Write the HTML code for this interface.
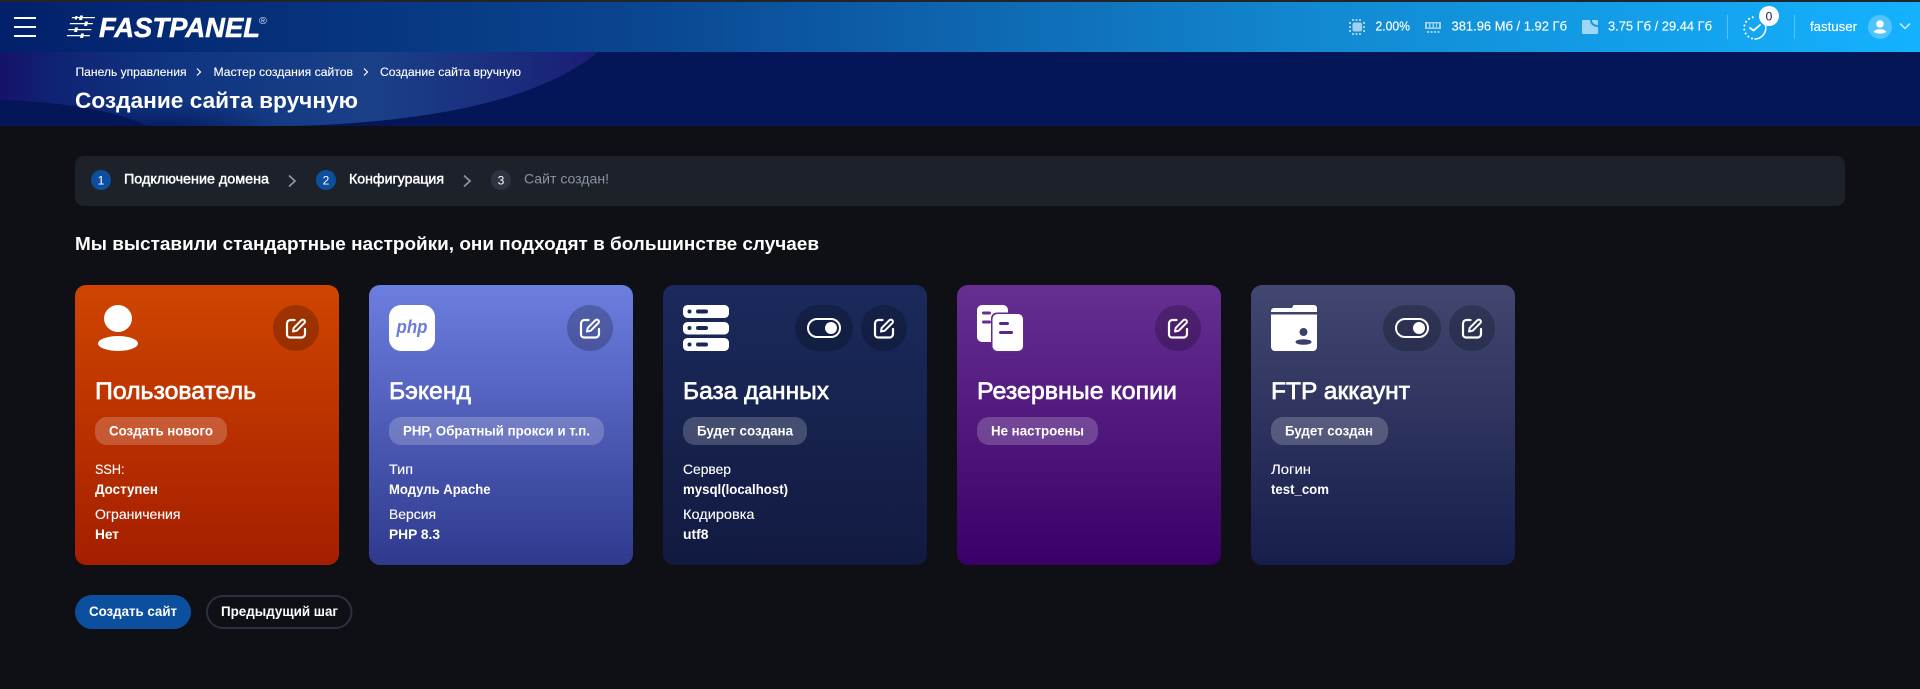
<!DOCTYPE html>
<html lang="ru">
<head>
<meta charset="utf-8">
<title>Создание сайта вручную</title>
<style>
html,body{margin:0;padding:0;background:#0e1016;width:1920px;height:689px;overflow:hidden}
svg{display:block}
text{font-family:"Liberation Sans",sans-serif;fill:#fff}
.m{stroke:#fff;stroke-width:.45px}
.t{font-size:24px;stroke:#fff;stroke-width:.65px}
.bd{font-size:14px;font-weight:700}
.l{font-size:14px;stroke:#fff;stroke-width:.12px}
.v{font-size:14px;font-weight:700}
.h{font-size:12.5px;stroke:#fff;stroke-width:.15px}
</style>
</head>
<body>
<svg width="1920" height="689" viewBox="0 0 1920 689" xmlns="http://www.w3.org/2000/svg">
<defs>
<clipPath id="sub"><rect x="0" y="52" width="1920" height="74"/></clipPath>
<linearGradient id="hd" x1="0" x2="1" y1="0" y2="0"><stop offset="0" stop-color="#03206a"/><stop offset=".33" stop-color="#0a4590"/><stop offset=".68" stop-color="#1288d0"/><stop offset="1" stop-color="#14b2ff"/></linearGradient>
<linearGradient id="arc" gradientUnits="userSpaceOnUse" x1="0" x2="598" y1="0" y2="0"><stop offset="0" stop-color="#15126a"/><stop offset=".1" stop-color="#0f2474"/><stop offset=".28" stop-color="#0f3480"/><stop offset=".62" stop-color="#1a4088"/><stop offset=".88" stop-color="#1a2a7c"/><stop offset="1" stop-color="#1c1c74"/></linearGradient>
<radialGradient id="shade" cx=".5" cy=".5" r=".5"><stop offset="0" stop-color="#041658" stop-opacity=".75"/><stop offset="1" stop-color="#041658" stop-opacity="0"/></radialGradient>
<linearGradient id="c1" x1="0" x2="0" y1="0" y2="1"><stop offset="0" stop-color="#cf4500"/><stop offset="1" stop-color="#a51e00"/></linearGradient>
<linearGradient id="c2" x1="0" x2="0" y1="0" y2="1"><stop offset="0" stop-color="#6c7edf"/><stop offset="1" stop-color="#2f3a8e"/></linearGradient>
<linearGradient id="c3" x1="0" x2="0" y1="0" y2="1"><stop offset="0" stop-color="#1b2a5c"/><stop offset="1" stop-color="#121a40"/></linearGradient>
<linearGradient id="c4" x1="0" x2="0" y1="0" y2="1"><stop offset="0" stop-color="#662f92"/><stop offset="1" stop-color="#3a0068"/></linearGradient>
<linearGradient id="c5" x1="0" x2="0" y1="0" y2="1"><stop offset="0" stop-color="#41476f"/><stop offset="1" stop-color="#181e4c"/></linearGradient>
<g id="edit" fill="none" stroke="#fff" stroke-linecap="round" stroke-linejoin="round">
<path stroke-width="2.200" d="M8.500 2H4.500A3.500 3.500 0 0 0 1 5.500v11A3 3 0 0 0 4 19.500h11.500a3.500 3.500 0 0 0 3.500-3.500V11"/>
<path stroke-width="2" d="M7 13.500l.7-3.600L15.400 2.200a2 2 0 0 1 2.900 0 2 2 0 0 1 0 2.900L10.600 12.800z"/>
</g>
<g id="tog"><rect x="1" y="1" width="32" height="18" rx="9" fill="none" stroke="#fff" stroke-width="2"/><circle cx="24" cy="10" r="6" fill="#fff"/></g>
</defs>

<rect width="1920" height="689" fill="#0e1016"/>

<!-- top bar -->
<rect y="0" width="1920" height="2" fill="#222428"/>
<rect y="2" width="1920" height="50" fill="url(#hd)"/>
<g fill="#fff">
<rect x="14" y="17" width="22" height="2"/><rect x="14" y="26" width="22" height="2"/><rect x="14" y="35" width="22" height="2"/>
</g>
<!-- logo -->
<g fill="#fff">
<path d="M72 17h23l-.3 1.300h-23zM80 15.500h3l-.9 4.500h-3zM75.500 16h2l-.7 3.500h-2z"/>
<path d="M70 23h23l-.3 1.300h-23zM85 21.500h3l-.9 4.500h-3z"/>
<path d="M68.500 29h23l-.3 1.300h-23zM75 27.500h3l-.9 4.500h-3z"/>
<path d="M67 35h23l-.3 1.300h-23zM81 33.500h3l-.9 4.500h-3z"/>
</g>
<text x="99" y="37" font-size="27.500" font-weight="700" font-style="italic" textLength="161" lengthAdjust="spacingAndGlyphs" stroke="#fff" stroke-width=".5">FASTPANEL</text>
<text x="259" y="24" font-size="10" textLength="8" lengthAdjust="spacingAndGlyphs" style="fill:#cfe0f5">®</text>

<!-- top right -->
<g fill="#fff" fill-opacity=".6">
<rect x="1352.500" y="22.500" width="9.500" height="9" rx="2"/>
<path d="M1352 19h2v2h-2zM1355.500 19h2v2h-2zM1359 19h2v2h-2zM1352 33h2v2h-2zM1355.500 33h2v2h-2zM1359 33h2v2h-2zM1349 22h2v2h-2zM1349 26h2v2h-2zM1349 30h2v2h-2zM1363 22h2v2h-2zM1363 26h2v2h-2zM1363 30h2v2h-2z"/>
<path fill-rule="evenodd" d="M1425 22h16v7h-16zM1427 23.500v4h2v-4zM1430.500 23.500v4h2v-4zM1434 23.500v4h2v-4zM1437 23.500v4h2v-4z"/>
<path d="M1427 31h2v2h-2zM1430.500 31h2v2h-2zM1434 31h2v2h-2zM1437.500 31h2v2h-2z"/>
<path d="M1582 21a1 1 0 0 1 1-1h7c0 4 3 7 8 7v6a1 1 0 0 1-1 1h-14a1 1 0 0 1-1-1z"/>
<path d="M1592 20h5a1 1 0 0 1 1 1v4c-3.500 0-6-2-6-5z"/>
</g>
<text x="1375.500" y="30.500" class="h" textLength="34.500" lengthAdjust="spacingAndGlyphs">2.00%</text>
<text x="1451.500" y="30.500" class="h" textLength="115.500" lengthAdjust="spacingAndGlyphs">381.96 Мб / 1.92 Гб</text>
<text x="1608" y="30.500" class="h" textLength="104" lengthAdjust="spacingAndGlyphs">3.75 Гб / 29.44 Гб</text>
<rect x="1727" y="15" width="1" height="24" fill="#fff" fill-opacity=".3"/>
<g fill="none" stroke="#fff" stroke-width="1.600" stroke-linecap="round">
<path d="M1764 22a11 11 0 0 1-9 17"/>
<path stroke-dasharray=".1 4" stroke-width="2" d="M1752 38.500a11 11 0 0 1 4-21.500"/>
<path stroke-width="1.800" d="M1750 28l3.500 2.500 6.500-5.500"/>
</g>
<circle cx="1769" cy="16" r="10" fill="#fff"/>
<text x="1769" y="20.500" font-size="12" text-anchor="middle" style="fill:#0c1a52">0</text>
<rect x="1794" y="15" width="1" height="24" fill="#fff" fill-opacity=".3"/>
<text x="1810" y="31" textLength="47" lengthAdjust="spacingAndGlyphs" class="h" style="font-size:13px">fastuser</text>
<circle cx="1880" cy="27" r="12" fill="#fff" fill-opacity=".25"/>
<circle cx="1880" cy="24" r="3.700" fill="#fff"/>
<ellipse cx="1880" cy="31.500" rx="6" ry="2.200" fill="#fff"/>
<path d="M1900 23.500l5 5 5-5" fill="none" stroke="#fff" stroke-opacity=".7" stroke-width="1.600"/>

<!-- page header -->
<rect y="52" width="1920" height="74" fill="#041658"/>
<path d="M0 52H598C540 100 430 122 295 126H147C120 112 70 102 0 100Z" fill="url(#arc)"/>
<g clip-path="url(#sub)"><ellipse cx="170" cy="128" rx="110" ry="26" fill="url(#shade)"/></g>
<text x="75.500" y="76" font-size="12" textLength="111" lengthAdjust="spacingAndGlyphs" stroke="#fff" stroke-width=".12">Панель управления</text>
<path d="M197 68.500l3.500 3.500-3.500 3.500" fill="none" stroke="#fff" stroke-width="1.200"/>
<text x="213.500" y="76" font-size="12" textLength="139.500" lengthAdjust="spacingAndGlyphs" stroke="#fff" stroke-width=".12">Мастер создания сайтов</text>
<path d="M364 68.500l3.500 3.500-3.500 3.500" fill="none" stroke="#fff" stroke-width="1.200"/>
<text x="380" y="76" font-size="12" textLength="141" lengthAdjust="spacingAndGlyphs" stroke="#fff" stroke-width=".12">Создание сайта вручную</text>
<text x="75" y="108" font-size="22" font-weight="700" textLength="283" lengthAdjust="spacingAndGlyphs">Создание сайта вручную</text>

<!-- steps -->
<rect x="75" y="156" width="1770" height="50" rx="9" fill="#1d2129"/>
<circle cx="101" cy="180" r="10" fill="#0b4f9e"/>
<text x="101" y="184.500" font-size="12" text-anchor="middle">1</text>
<text x="124" y="183.500" font-size="14" textLength="145" lengthAdjust="spacingAndGlyphs" class="m">Подключение домена</text>
<path d="M289 175.500l6 5.500-6 5.500" fill="none" stroke="#8a93a3" stroke-width="1.800"/>
<circle cx="326" cy="180" r="10" fill="#0b4f9e"/>
<text x="326" y="184.500" font-size="12" text-anchor="middle">2</text>
<text x="349" y="183.500" font-size="14" textLength="95" lengthAdjust="spacingAndGlyphs" class="m">Конфигурация</text>
<path d="M464 175.500l6 5.500-6 5.500" fill="none" stroke="#8a93a3" stroke-width="1.800"/>
<circle cx="501" cy="180" r="10" fill="#2d3340"/>
<text x="501" y="184.500" font-size="12" text-anchor="middle">3</text>
<text x="524" y="183.500" font-size="14" textLength="85" lengthAdjust="spacingAndGlyphs" style="fill:#8a93a3">Сайт создан!</text>

<text x="75" y="250" font-size="18" font-weight="700" textLength="744" lengthAdjust="spacingAndGlyphs">Мы выставили стандартные настройки, они подходят в большинстве случаев</text>

<!-- card 1 -->
<rect x="75" y="285" width="264" height="280" rx="11" fill="url(#c1)"/>
<ellipse cx="118" cy="318.500" rx="14" ry="13.500" fill="#fff"/>
<ellipse cx="118" cy="343.500" rx="20" ry="7.500" fill="#fff"/>
<rect x="273" y="305" width="46" height="46" rx="23" fill="#000" fill-opacity=".22"/>
<use href="#edit" x="286" y="318"/>
<text x="95" y="399" class="t" textLength="161" lengthAdjust="spacingAndGlyphs">Пользователь</text>
<rect x="95" y="417" width="132" height="28" rx="12" fill="#fff" fill-opacity=".2"/>
<text x="109" y="435.500" class="bd" textLength="104" lengthAdjust="spacingAndGlyphs">Создать нового</text>
<text x="95" y="474" class="l" textLength="29.500" lengthAdjust="spacingAndGlyphs">SSH:</text>
<text x="95" y="494" class="v" textLength="63" lengthAdjust="spacingAndGlyphs">Доступен</text>
<text x="95" y="519" class="l" textLength="85.500" lengthAdjust="spacingAndGlyphs">Ограничения</text>
<text x="95" y="539" class="v" textLength="24" lengthAdjust="spacingAndGlyphs">Нет</text>

<!-- card 2 -->
<rect x="369" y="285" width="264" height="280" rx="11" fill="url(#c2)"/>
<rect x="389" y="305" width="46" height="46" rx="12" fill="#fff"/>
<text x="396.500" y="333" font-size="18" font-weight="700" font-style="italic" textLength="31" lengthAdjust="spacingAndGlyphs" style="fill:#6a7bd8">php</text>
<rect x="567" y="305" width="46" height="46" rx="23" fill="#000" fill-opacity=".22"/>
<use href="#edit" x="580" y="318"/>
<text x="389" y="399" class="t" textLength="82" lengthAdjust="spacingAndGlyphs">Бэкенд</text>
<rect x="389" y="417" width="215" height="28" rx="12" fill="#fff" fill-opacity=".2"/>
<text x="403" y="435.500" class="bd" textLength="187" lengthAdjust="spacingAndGlyphs">PHP, Обратный прокси и т.п.</text>
<text x="389" y="474" class="l" textLength="24" lengthAdjust="spacingAndGlyphs">Тип</text>
<text x="389" y="494" class="v" textLength="101.500" lengthAdjust="spacingAndGlyphs">Модуль Apache</text>
<text x="389" y="519" class="l" textLength="47" lengthAdjust="spacingAndGlyphs">Версия</text>
<text x="389" y="539" class="v" textLength="51" lengthAdjust="spacingAndGlyphs">PHP 8.3</text>

<!-- card 3 -->
<rect x="663" y="285" width="264" height="280" rx="11" fill="url(#c3)"/>
<g fill="#fff"><rect x="683" y="305" width="46" height="13" rx="4.500"/><rect x="683" y="322" width="46" height="12.500" rx="4.500"/><rect x="683" y="338" width="46" height="13" rx="4.500"/></g>
<g fill="#1a2858"><circle cx="689.500" cy="311.500" r="2"/><rect x="696" y="309.500" width="12" height="4" rx="2"/><circle cx="689.500" cy="328" r="2"/><rect x="696" y="326" width="12" height="4" rx="2"/><circle cx="689.500" cy="344.500" r="2"/><rect x="696" y="342.500" width="12" height="4" rx="2"/></g>
<rect x="795" y="305" width="58" height="46" rx="23" fill="#000" fill-opacity=".22"/>
<use href="#tog" x="807" y="318"/>
<rect x="861" y="305" width="46" height="46" rx="23" fill="#000" fill-opacity=".22"/>
<use href="#edit" x="874" y="318"/>
<text x="683" y="399" class="t" textLength="146" lengthAdjust="spacingAndGlyphs">База данных</text>
<rect x="683" y="417" width="124" height="28" rx="12" fill="#fff" fill-opacity=".2"/>
<text x="697" y="435.500" class="bd" textLength="96" lengthAdjust="spacingAndGlyphs">Будет создана</text>
<text x="683" y="474" class="l" textLength="48" lengthAdjust="spacingAndGlyphs">Сервер</text>
<text x="683" y="494" class="v" textLength="105" lengthAdjust="spacingAndGlyphs">mysql(localhost)</text>
<text x="683" y="519" class="l" textLength="71.500" lengthAdjust="spacingAndGlyphs">Кодировка</text>
<text x="683" y="539" class="v" textLength="25.500" lengthAdjust="spacingAndGlyphs">utf8</text>

<!-- card 4 -->
<rect x="957" y="285" width="264" height="280" rx="11" fill="url(#c4)"/>
<rect x="977" y="305" width="31" height="37" rx="5" fill="#fff"/>
<g fill="#632e90"><rect x="982" y="311.500" width="9" height="3" rx="1.500"/><rect x="982" y="320.500" width="9" height="3" rx="1.500"/></g>
<rect x="991" y="312.500" width="33.500" height="40" rx="6" fill="#5f2b8c"/>
<rect x="992.500" y="314" width="30.500" height="37" rx="5" fill="#fff"/>
<g fill="#5a2688"><rect x="999" y="322" width="10" height="3" rx="1.500"/><rect x="999" y="331" width="14" height="3" rx="1.500"/></g>
<rect x="1155" y="305" width="46" height="46" rx="23" fill="#000" fill-opacity=".22"/>
<use href="#edit" x="1168" y="318"/>
<text x="977" y="399" class="t" textLength="200" lengthAdjust="spacingAndGlyphs">Резервные копии</text>
<rect x="977" y="417" width="121" height="28" rx="12" fill="#fff" fill-opacity=".2"/>
<text x="991" y="435.500" class="bd" textLength="93" lengthAdjust="spacingAndGlyphs">Не настроены</text>

<!-- card 5 -->
<rect x="1251" y="285" width="264" height="280" rx="11" fill="url(#c5)"/>
<path d="M1271 311a3 3 0 0 1 3-3h18l1.500-3h20.500a3 3 0 0 1 3 3v4h-46z" fill="#fff"/>
<path d="M1271 314.500h46v32.500a4 4 0 0 1-4 4h-38a4 4 0 0 1-4-4z" fill="#fff"/>
<circle cx="1303.500" cy="332" r="4" fill="#3a4068"/>
<ellipse cx="1303.500" cy="342" rx="8" ry="2.800" fill="#3a4068"/>
<rect x="1383" y="305" width="58" height="46" rx="23" fill="#000" fill-opacity=".22"/>
<use href="#tog" x="1395" y="318"/>
<rect x="1449" y="305" width="46" height="46" rx="23" fill="#000" fill-opacity=".22"/>
<use href="#edit" x="1462" y="318"/>
<text x="1271" y="399" class="t" textLength="139" lengthAdjust="spacingAndGlyphs">FTP аккаунт</text>
<rect x="1271" y="417" width="117" height="28" rx="12" fill="#fff" fill-opacity=".2"/>
<text x="1285" y="435.500" class="bd" textLength="88" lengthAdjust="spacingAndGlyphs">Будет создан</text>
<text x="1271" y="474" class="l" textLength="40" lengthAdjust="spacingAndGlyphs">Логин</text>
<text x="1271" y="494" class="v" textLength="58" lengthAdjust="spacingAndGlyphs">test_com</text>

<!-- buttons -->
<rect x="75" y="595" width="116" height="34" rx="17" fill="#0b4f9e"/>
<text x="89" y="616" font-size="13.500" font-weight="700" textLength="88" lengthAdjust="spacingAndGlyphs">Создать сайт</text>
<rect x="207" y="596" width="144.500" height="32" rx="16" fill="none" stroke="#2b3140" stroke-width="2"/>
<text x="221" y="616" font-size="13.500" font-weight="700" textLength="117" lengthAdjust="spacingAndGlyphs">Предыдущий шаг</text>
</svg>
</body>
</html>
